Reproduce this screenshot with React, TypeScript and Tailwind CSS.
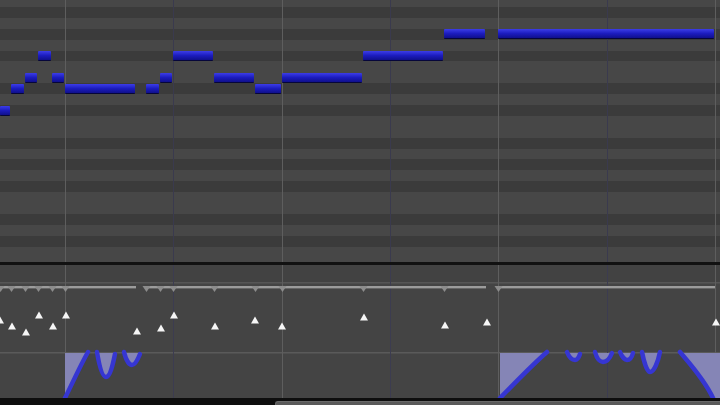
import React from 'react';

const ROW_H = 10.9;
const FIRST_ROW_H = 7;
const DARK_ROWS = new Set([1, 3, 5, 8, 10, 13, 15, 17, 20, 22]);

const rowTop = (k: number) => (k === 0 ? 0 : FIRST_ROW_H + (k - 1) * ROW_H);

const notes: { row: number; x0: number; x1: number }[] = [
	{ row: 10, x0: 0, x1: 11 },
	{ row: 8, x0: 11, x1: 25 },
	{ row: 7, x0: 25, x1: 38 },
	{ row: 5, x0: 38, x1: 52 },
	{ row: 7, x0: 52, x1: 65 },
	{ row: 8, x0: 65, x1: 136 },
	{ row: 8, x0: 146, x1: 160 },
	{ row: 7, x0: 160, x1: 173 },
	{ row: 5, x0: 173, x1: 214 },
	{ row: 7, x0: 214, x1: 255 },
	{ row: 8, x0: 255, x1: 282 },
	{ row: 7, x0: 282, x1: 363 },
	{ row: 5, x0: 363, x1: 444 },
	{ row: 3, x0: 444, x1: 486 },
	{ row: 3, x0: 498, x1: 715 },
];

// bar lines are light, beat lines bluish
const gridLines = [
	{ x: 65, bar: true },
	{ x: 173, bar: false },
	{ x: 282, bar: true },
	{ x: 390, bar: false },
	{ x: 498, bar: true },
	{ x: 607, bar: false },
	{ x: 715, bar: true },
];

const noteStarts = [0, 11, 25, 38, 52, 65, 146, 160, 173, 214, 255, 282, 363, 444, 498];
const lengthSegments: [number, number][] = [
	[0, 136],
	[145, 486],
	[498, 715],
];

// velocity handles: center x, center y (relative to lower panel top, 265)
const velocities: [number, number][] = [
	[0, 55],
	[12, 61],
	[26, 67],
	[39, 50],
	[53, 61],
	[66, 50],
	[137, 66],
	[161, 63],
	[174, 50],
	[215, 61],
	[255, 55],
	[282, 61],
	[364, 52],
	[445, 60],
	[487, 57],
	[716, 57],
];

const PianoGrid = () => (
	<div className="relative h-[262px] overflow-hidden">
		<div className="flex flex-col">
			{Array.from({ length: 25 }, (_, k) => (
				<div
					key={k}
					className={`${k === 0 ? 'h-[7px]' : 'h-[10.9px]'} shrink-0 ${DARK_ROWS.has(k) ? 'bg-[#3b3b3b]' : 'bg-[#474747]'}`}
				/>
			))}
		</div>
		{gridLines.map((l) => (
			<div
				key={l.x}
				className={`absolute top-0 bottom-0 w-px ${l.bar ? 'bg-[#5e5e5e]' : 'bg-[#3a3a4e]'}`}
				style={{ left: l.x }}
			/>
		))}
		{notes.map((n, i) => (
			<div
				key={i}
				className="absolute rounded-[1px] border-b-[1.5px] border-[#06063a] bg-linear-to-b from-[#3c3ce8] via-[#1c1cbe] to-[#10108c]"
				style={{ left: n.x0, top: rowTop(n.row) + 0.6, width: n.x1 - n.x0 - 1, height: 10 }}
			/>
		))}
	</div>
);

const LowerPanel = () => (
	<svg width={720} height={133} className="block">
		<rect x={0} y={0} width={720} height={133} fill="#444444" />
		<rect x={0} y={0} width={720} height={17} fill="#424242" />
		<rect x={0} y={17} width={720} height={1.5} fill="#565656" />
		<rect x={0} y={87} width={720} height={1.5} fill="#5a5a5a" />
		{gridLines.map((l) => (
			<rect key={l.x} x={l.x} y={0} width={1} height={133} fill={l.bar ? '#5e5e5e' : '#3c3c50'} />
		))}

		{/* note length line */}
		{lengthSegments.map(([a, b]) => (
			<rect key={a} x={a} y={21} width={b - a} height={2.4} fill="#9c9c9c" />
		))}
		{noteStarts.map((x) => (
			<polygon key={x} points={`${x - 3.5},21 ${x + 4.5},21 ${x + 0.5},27`} fill="#8c8c8c" />
		))}

		{/* velocity handles */}
		{velocities.map(([x, y]) => (
			<polygon key={x} points={`${x - 4},${y + 3.5} ${x + 4},${y + 3.5} ${x},${y - 3.5}`} fill="#f6f6f6" />
		))}

		{/* controller lane */}
		<g fill="#8585b6">
			<path d="M65,88 L65,133 C73,117 80,101 88,88 Z" />
			<path d="M97,88 C99,99 102,112 106,112 C110,112 113,99 115,88 Z" />
			<path d="M124,88 C126,95 129,100 132,100 C135,100 138,94 140,88 Z" />
			<path d="M500,88 L500,133 C515,118 531,101 547,88 Z" />
			<path d="M567,88 C569,92 572,95 575,95 C578,95 579,92 580,88 Z" />
			<path d="M595,88 C597,94 600,97 603,97 C607,97 610,93 612,88 Z" />
			<path d="M620,88 C622,92 625,95 627,95 C630,95 632,92 633,88 Z" />
			<path d="M642,88 C644,97 647,107 650,107 C654,107 658,97 660,88 Z" />
			<path d="M680,88 C690,99 704,114 713,133 L720,133 L720,88 Z" />
		</g>
		<g fill="none" stroke="#3636d2" strokeWidth={4.5} strokeLinecap="round">
			<path d="M65,133 C73,117 80,101 88,87" />
			<path d="M97,87 C99,99 102,112 106,112 C110,112 113,99 115,89" />
			<path d="M124,87 C126,95 129,100 132,100 C135,100 138,94 140,89" />
			<path d="M500,133 C515,118 531,101 547,87" />
			<path d="M567,87 C569,92 572,95 575,95 C578,95 579,92 580,89" />
			<path d="M595,87 C597,94 600,97 603,97 C607,97 610,93 612,88" />
			<path d="M620,87 C622,92 625,95 627,95 C630,95 632,92 633,88" />
			<path d="M642,87 C644,97 647,107 650,107 C654,107 658,97 660,87" />
			<path d="M680,87 C690,99 704,114 713,133" />
		</g>
	</svg>
);

const App = () => {
	return (
		<div className="w-[720px] h-[405px] overflow-hidden bg-[#444444] flex flex-col">
			<PianoGrid />
			<div className="h-[3px] shrink-0 bg-[#111111]" />
			<LowerPanel />
			<div className="flex-1 bg-[#0e0e0e] flex pt-[3px]">
				<div className="ml-[275px] flex-1 rounded-tl-[3px] bg-[#5a5a5a] border-t border-l border-[#6a6a6a]" />
			</div>
		</div>
	);
};

export default App;
